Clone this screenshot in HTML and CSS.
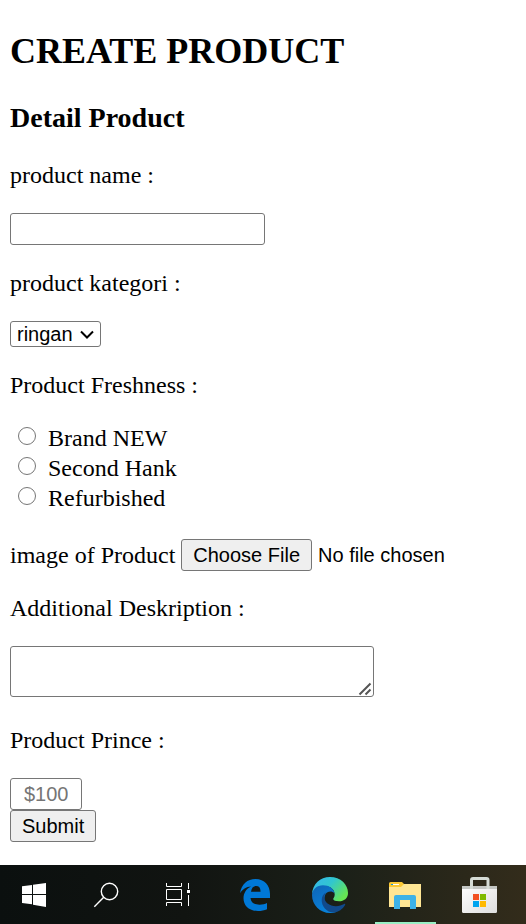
FILE: index.html
```html
<!DOCTYPE html>
<html lang="en">
<head>
<meta charset="utf-8">
<meta name="viewport" content="width=device-width, initial-scale=1">
<title>Create Product</title>
<link rel="stylesheet" href="styles.css">
</head>
<body>
<main class="page">
  <h1 class="title">CREATE PRODUCT</h1>
  <h3 class="subtitle">Detail Product</h3>
  <form class="form">
    <label class="caption" for="name">product name :</label>
    <input class="control name" id="name" type="text">

    <label class="caption" for="category">product kategori :</label>
    <span class="select-wrap">
      <select class="control category" id="category">
        <option>ringan</option>
        <option>berat</option>
      </select>
      <svg class="chevron" viewBox="0 0 14 9" aria-hidden="true"><path d="M1 1.500 7 7.500l6-6" fill="none" stroke="#000" stroke-width="2"/></svg>
    </span>

    <fieldset class="freshness">
      <legend class="caption">Product Freshness :</legend>
      <label class="option"><input class="radio" type="radio" name="freshness">Brand NEW</label>
      <label class="option"><input class="radio" type="radio" name="freshness">Second Hank</label>
      <label class="option"><input class="radio" type="radio" name="freshness">Refurbished</label>
    </fieldset>

    <div class="upload">
      <label for="image">image of Product</label>
      <input class="file" id="image" type="file">
    </div>

    <label class="caption" for="description">Additional Deskription :</label>
    <span class="textarea-wrap">
      <textarea class="control description" id="description"></textarea>
      <svg class="grip" viewBox="0 0 14 14" aria-hidden="true"><path d="M1.500 12.500 12.500 1.500M7.500 12.500l5-5" fill="none" stroke="#555" stroke-width="2"/></svg>
    </span>

    <label class="caption" for="price">Product Prince :</label>
    <input class="control price" id="price" type="text" placeholder="$100">
    <button class="control submit" type="submit">Submit</button>
  </form>
</main>

<nav class="taskbar" aria-label="Taskbar">
  <button class="task system" type="button" aria-label="Start">
    <svg viewBox="0 865 72 59"><path fill="#fff" d="M22 886.300 32 885v9H22zM33 884.800 46 883v11H33zM22 895h10v9.300l-10-1.300zM33 895h13v12l-13-2.200z"/></svg>
  </button>
  <button class="task system" type="button" aria-label="Search">
    <svg viewBox="72 865 72 59"><g fill="none" stroke="#fff" stroke-width="1.400"><circle cx="109.500" cy="891.500" r="8.200"/><path d="M103.500 897.500 94.300 906.700"/></g></svg>
  </button>
  <button class="task system" type="button" aria-label="Task view">
    <svg viewBox="144 865 72 59"><g fill="none" stroke="#fff"><path d="M166.500 883v3.500h15V883M166.500 889.500h15v10h-15zM166.500 906v-3.500h15v3.500M188.500 883v23"/></g><path fill="#111411" d="M186 889h5v6h-5z"/><path fill="#fff" d="M187 890h3v3h-3z"/></svg>
  </button>
  <button class="task app" type="button" aria-label="Edge Legacy">
    <svg viewBox="216 865 75 59"><path fill="#0078d7" d="M240 893.300c1.400-9.300 7.400-14.300 15.500-14.300 9 0 14.500 6.500 14.500 15v4h-19.500c.3 4.700 4 6.700 9 6.700 3 0 5.700-.6 7.500-1.700v6.200c-2.500 1.200-5.800 1.800-9 1.800-8.700 0-14.500-5-14.500-12.700 0-5.200 2.800-9.500 7.500-11.800-5 .3-8.300 2.700-11 6.800zM251 891.800h9.500c.2-3.800-1.300-5.800-4.400-5.800-2.900 0-4.600 2.300-5.100 5.800z"/></svg>
  </button>
  <button class="task app" type="button" aria-label="Edge">
    <svg viewBox="291 865 75 59">
      <defs>
        <linearGradient id="edge-top" x1="0" y1="0" x2="1" y2=".6"><stop offset="0" stop-color="#36b5ef"/><stop offset=".5" stop-color="#31c6cf"/><stop offset="1" stop-color="#66e553"/></linearGradient>
        <linearGradient id="edge-left" x1="0" y1="0" x2=".6" y2="1"><stop offset="0" stop-color="#0f64b5"/><stop offset="1" stop-color="#0883dc"/></linearGradient>
      </defs>
      <path fill="url(#edge-top)" d="M312 894c.7-9.800 8-17 18-17 10.700 0 18 7.500 18 16 0 5.500-4 8.300-9 8.300-3.300 0-5.800-1-5.800-2.300 0-1 1.500-1.700 1.500-4.500 0-5-4.500-8.500-10.200-8.500-5.500 0-10.200 2.700-12.500 8z"/>
      <path fill="url(#edge-left)" d="M312 895c.3-5.700 5-9.700 11-9.700 6 0 11 3.500 11.500 8.200-1.800-2.300-4.800-2.500-7.500-1-4 3-3.500 11.500 1.500 15.500 3 2.500 6 3.700 8.500 3.500-2 1-4.500 1.500-7 1.500-10 0-18-8-18-18z"/>
      <path fill="#114a8b" d="M326 892.500c-2.500 3-2 8 1.200 10.700 5.500 4.300 12.500 3.300 17 .8.800-.4 1.300.2.900.9-2.500 4.200-6.500 7.100-11.100 7.600-7.500.2-12.500-6.500-12.300-12.500.1-3.500 1.700-6.300 4.300-7.500z"/>
    </svg>
  </button>
  <button class="task app active" type="button" aria-label="File Explorer">
    <svg viewBox="366 865 75 59"><path fill="#ffe694" d="M389 884h32v23h-32z"/><path fill="#fcc934" d="M389 883.500q0-1.500 1.500-1.500H402l2 2-3 3h-12z"/><path fill="#fff" d="M391 884h8v1h-8z"/><path fill="#159bd7" d="M391 884h2v1h-2z"/><path fill="#3db2e7" d="M394 909v-12q0-2 2-2h18q2 0 2 2v12h-6v-9h-10v9z"/></svg>
  </button>
  <button class="task app" type="button" aria-label="Microsoft Store">
    <svg viewBox="441 865 75 59"><defs><linearGradient id="bag" x1="0" y1="0" x2="1" y2="1"><stop offset="0" stop-color="#fff"/><stop offset="1" stop-color="#dedede"/></linearGradient></defs><path fill="url(#bag)" d="M462 886h35v25.500q0 1.500-1.500 1.500h-32q-1.500 0-1.500-1.500z"/><path fill="#c3c6c3" d="M462 886h35v3h-35z"/><path fill="none" stroke="#d5dbd5" stroke-width="3" d="M471.500 889v-9q0-1.500 1.500-1.500h13.500q1.500 0 1.500 1.500v9"/><path fill="#f25022" d="M473 894h6v6h-6z"/><path fill="#7fba00" d="M480 894h6v6h-6z"/><path fill="#00a4ef" d="M473 901h6v6h-6z"/><path fill="#ffb900" d="M480 901h6v6h-6z"/></svg>
  </button>
</nav>
</body>
</html>
```
FILE: styles.css
```css
* {
  box-sizing: border-box;
}

body {
  margin: 0;
  min-height: 100vh;
  display: flex;
  flex-direction: column;
  background: #fff;
  color: #000;
  font: 24px/28px "Liberation Serif", "Times New Roman", serif;
}

.page {
  padding: 31px 10px 22px;
}

.title {
  margin: 0 0 31px;
  font-size: 36px;
  line-height: 40px;
}

.subtitle {
  margin: 0 0 27px;
  font-size: 28px;
  line-height: 32px;
}

.form {
  display: flex;
  flex-direction: column;
  align-items: flex-start;
}

.caption {
  margin-bottom: 24px;
  padding: 0;
}

.control {
  height: 32px;
  margin: 0;
  border: 1px solid #767676;
  border-radius: 3px;
  background: #fff;
  color: #000;
  font: 20px/24px "Liberation Sans", Arial, sans-serif;
}

.name {
  width: 255px;
  max-width: 100%;
  margin-bottom: 24px;
  padding: 2px 4px;
}

.select-wrap,
.textarea-wrap {
  position: relative;
  display: flex;
  max-width: 100%;
  margin-bottom: 24px;
}

.category {
  height: 26px;
  padding: 0 27px 0 6px;
  appearance: none;
}

.chevron {
  position: absolute;
  right: 7px;
  top: 9px;
  width: 14px;
  height: 9px;
  pointer-events: none;
}

.freshness {
  min-width: 0;
  margin: 0 0 26px;
  padding: 0;
  border: 0;
}

.option {
  display: flex;
  align-items: flex-start;
  gap: 12px;
  padding-left: 8px;
  line-height: 30px;
}

.radio {
  width: 18px;
  height: 18px;
  margin: 4px 0 0;
  border: 1px solid #767676;
  border-radius: 50%;
  background: #fff;
  appearance: none;
}

.radio:checked {
  border-color: #0075ff;
  background: #0075ff;
  box-shadow: inset 0 0 0 3px #fff;
}

.upload {
  display: flex;
  align-items: center;
  gap: 6px;
  max-width: 100%;
  margin-bottom: 23px;
}

.file {
  min-width: 0;
  width: 320px;
  height: 32px;
  font: 20px/30px "Liberation Sans", Arial, sans-serif;
}

.file::file-selector-button {
  height: 32px;
  margin: 0 6px 0 0;
  padding: 0 11px;
  border: 1px solid #767676;
  border-radius: 3px;
  background: #efefef;
  color: #000;
  font: inherit;
}

.textarea-wrap {
  margin-bottom: 29px;
}

.description {
  width: 364px;
  max-width: 100%;
  height: 51px;
  padding: 3px;
}

.description::-webkit-resizer {
  background: transparent;
}

.grip {
  position: absolute;
  right: 2px;
  bottom: 1px;
  width: 14px;
  height: 14px;
  pointer-events: none;
}

.price {
  width: 72px;
  padding: 2px 13px;
}

.price::placeholder {
  color: #757575;
}

.submit {
  padding: 0 11px;
  background: #efefef;
}

.taskbar {
  display: flex;
  margin-top: auto;
  background: linear-gradient(90deg, #0b100f 0%, #111411 35%, #1b2018 65%, #332c1b 100%);
}

.task {
  display: flex;
  flex: none;
  padding: 0;
  border: 0;
  background: none;
}

.task svg {
  width: 100%;
  height: 59px;
}

.system {
  width: 72px;
}

.app {
  position: relative;
  width: 75px;
}

.active::after {
  content: "";
  position: absolute;
  left: 9px;
  right: 5px;
  bottom: 0;
  height: 2px;
  background: #98efc5;
}
```
